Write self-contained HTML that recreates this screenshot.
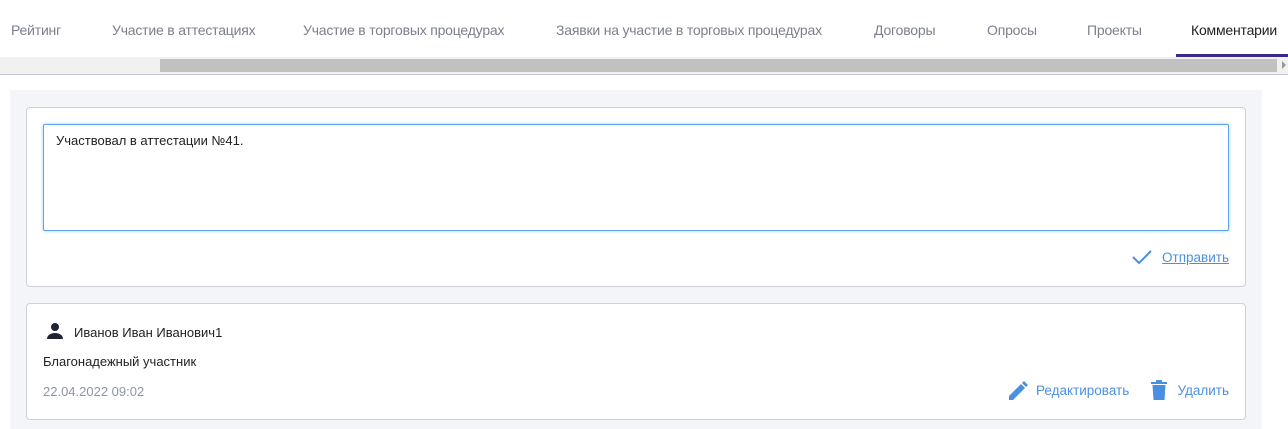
<!DOCTYPE html><html><head><meta charset="utf-8"><style>
body{margin:0;width:1288px;height:429px;overflow:hidden;background:#fff;font-family:"Liberation Sans",sans-serif;position:relative}
.a{position:absolute}
.tab{position:absolute;top:22px;font-size:14px;color:#7b7f8f;white-space:nowrap;letter-spacing:-0.2px}
.card{position:absolute;left:26px;width:1218px;background:#fff;border:1px solid #cfd1d8;border-radius:4px}
.blue{color:#4a90e2;font-size:13.5px}
</style></head><body>
<div class="tab" style="left:11px">Рейтинг</div>
<div class="tab" style="left:112px">Участие в аттестациях</div>
<div class="tab" style="left:303px">Участие в торговых процедурах</div>
<div class="tab" style="left:556px">Заявки на участие в торговых процедурах</div>
<div class="tab" style="left:874px">Договоры</div>
<div class="tab" style="left:987px">Опросы</div>
<div class="tab" style="left:1087px">Проекты</div>
<div class="tab" style="left:1191px;color:#222">Комментарии</div>
<div class="a" style="left:1176px;top:54px;width:112px;height:3px;background:#3b2a8c"></div>
<div class="a" style="left:0;top:57px;width:1288px;height:17px;background:#f1f1f1;border-bottom:1px solid #c8c8dc"></div>
<div class="a" style="left:160px;top:59px;width:1117px;height:13px;background:#c1c1c1"></div>
<div class="a" style="left:1282px;top:61px;width:0;height:0;border-left:4px solid #999;border-top:4px solid transparent;border-bottom:4px solid transparent"></div>
<div class="a" style="left:10px;top:90px;width:1252px;height:339px;background:#f4f5f9"></div>
<div class="card" style="top:107px;height:178px"></div>
<div class="a" style="left:43px;top:124px;width:1184px;height:105px;border:1px solid #5aa7f0;border-radius:2px;box-shadow:0 0 3px #9ccaf5;background:#fff"></div>
<div class="a" style="left:56px;top:133px;font-size:13px;color:#222">Участвовал в аттестации №41.</div>
<svg class="a" style="left:1131px;top:248px" width="22" height="18" viewBox="0 0 22 18"><path d="M2 9l6 6L20 3" fill="none" stroke="#4a90e2" stroke-width="2"/></svg>
<div class="a blue" style="right:59px;top:250px;text-decoration:underline">Отправить</div>
<div class="card" style="top:303px;height:115px"></div>
<svg class="a" style="left:46px;top:322px" width="18" height="18" viewBox="0 0 18 18"><circle cx="9" cy="5" r="4" fill="#1e2433"/><path d="M1 17c0-4 4-6 8-6s8 2 8 6z" fill="#1e2433"/></svg>
<div class="a" style="left:74px;top:325px;font-size:13px;color:#222">Иванов Иван Иванович1</div>
<div class="a" style="left:43px;top:354px;font-size:13px;color:#222">Благонадежный участник</div>
<div class="a" style="left:43px;top:384px;font-size:13px;color:#8f95a6">22.04.2022 09:02</div>
<svg class="a" style="left:1008px;top:381px" width="20" height="20" viewBox="0 0 20 20"><path d="M1 19v-4L13 3l4 4L5 19z M14 2l2-2 4 4-2 2z" fill="#4a90e2"/></svg>
<div class="a blue" style="left:1036px;top:383px">Редактировать</div>
<svg class="a" style="left:1150px;top:380px" width="18" height="20" viewBox="0 0 18 20"><rect x="1" y="2" width="16" height="2" fill="#4a90e2"/><rect x="6" y="0" width="6" height="3" fill="#4a90e2"/><path d="M2.5 5h13l-1 15h-11z" fill="#4a90e2"/></svg>
<div class="a blue" style="right:59px;top:383px">Удалить</div>
</body></html>
